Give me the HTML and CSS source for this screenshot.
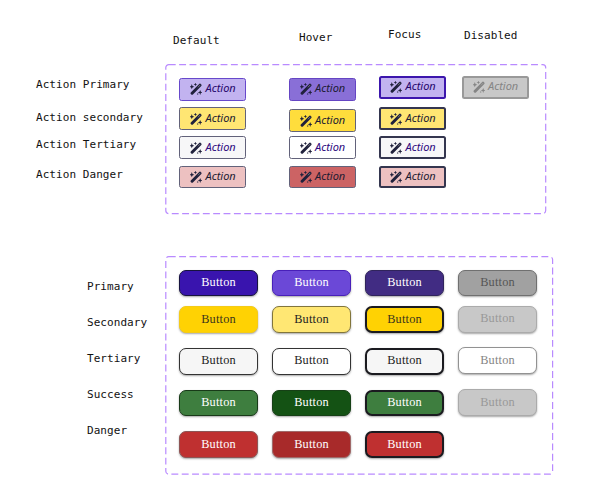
FILE: index.html
```html
<!DOCTYPE html>
<html lang="en">
<head>
<meta charset="utf-8">
<title>Button states</title>
<link rel="stylesheet" href="styles.css">
</head>
<body>
<svg class="defs" width="0" height="0" aria-hidden="true">
  <symbol id="wand" viewBox="0 0 12 12">
    <path d="M2.1 10.2 10 2.2" fill="none" stroke="currentColor" stroke-width="3" stroke-linecap="round"/>
    <path class="slit" d="M8.2 4 10 2.2" fill="none" stroke-width=".6" stroke-linecap="round"/>
    <path fill="currentColor" d="M1.8 1.1 2.5 3 4.4 3.7 2.5 4.4 1.8 6.3 1.1 4.4-.8 3.7 1.1 3ZM5.4-.5 5.9.9 7.2 1.4 5.9 1.9 5.4 3.2 4.9 1.9 3.6 1.4 4.9.9ZM10.2 6.9 10.9 8.8 12.8 9.4 10.9 10.1 10.2 12 9.5 10.1 7.6 9.4 9.5 8.8ZM7.8 9.8 8.1 10.7 9 11 8.1 11.3 7.8 12.2 7.5 11.3 6.6 11 7.5 10.7Z"/>
  </symbol>
</svg>
<header class="states">
  <span class="s-default">Default</span><span class="s-hover">Hover</span><span class="s-focus">Focus</span><span class="s-disabled">Disabled</span>
</header>
<section class="group actions">
  <div class="labels">
    <span>Action Primary</span><span>Action secondary</span><span>Action Tertiary</span><span>Action Danger</span>
  </div>
  <div class="panel">
    <svg class="frame" width="382" height="151"><rect x=".8" y=".6" width="379.9" height="149" rx="3"/></svg>
    <div class="col">
      <button class="action lilac"><svg><use href="#wand"/></svg>Action</button>
      <button class="action yellow"><svg><use href="#wand"/></svg>Action</button>
      <button class="action light"><svg><use href="#wand"/></svg>Action</button>
      <button class="action pink"><svg><use href="#wand"/></svg>Action</button>
    </div>
    <div class="col hover">
      <button class="action violet"><svg><use href="#wand"/></svg>Action</button>
      <button class="action gold"><svg><use href="#wand"/></svg>Action</button>
      <button class="action white"><svg><use href="#wand"/></svg>Action</button>
      <button class="action red"><svg><use href="#wand"/></svg>Action</button>
    </div>
    <div class="col focus">
      <button class="action lilac"><svg><use href="#wand"/></svg>Action</button>
      <button class="action yellow"><svg><use href="#wand"/></svg>Action</button>
      <button class="action light"><svg><use href="#wand"/></svg>Action</button>
      <button class="action pink"><svg><use href="#wand"/></svg>Action</button>
    </div>
    <div class="col disabled">
      <button class="action grey" disabled><svg><use href="#wand"/></svg>Action</button>
    </div>
  </div>
</section>
<section class="group buttons">
  <div class="labels">
    <span>Primary</span><span>Secondary</span><span>Tertiary</span><span>Success</span><span>Danger</span>
  </div>
  <div class="panel">
    <svg class="frame" width="389" height="220"><rect x=".8" y=".6" width="386.8" height="217.6" rx="3"/></svg>
    <div class="col">
      <button class="btn primary">Button</button>
      <button class="btn secondary">Button</button>
      <button class="btn tertiary">Button</button>
      <button class="btn success">Button</button>
      <button class="btn danger">Button</button>
    </div>
    <div class="col">
      <button class="btn primary-hover">Button</button>
      <button class="btn secondary-hover">Button</button>
      <button class="btn tertiary-hover">Button</button>
      <button class="btn success-hover">Button</button>
      <button class="btn danger-hover">Button</button>
    </div>
    <div class="col focus">
      <button class="btn primary-focus">Button</button>
      <button class="btn secondary">Button</button>
      <button class="btn tertiary">Button</button>
      <button class="btn success">Button</button>
      <button class="btn danger">Button</button>
    </div>
    <div class="col disabled">
      <button class="btn off-dark" disabled>Button</button>
      <button class="btn off" disabled>Button</button>
      <button class="btn off-white" disabled>Button</button>
      <button class="btn off" disabled>Button</button>
    </div>
  </div>
</section>
</body>
</html>
```
FILE: styles.css
```css
* { box-sizing: border-box; }
body {
  margin: 0;
  width: 606px;
  height: 501px;
  overflow: hidden;
  background: #fff;
  color: #111;
  font: 11px/14px "DejaVu Sans Mono", "Liberation Mono", monospace;
  letter-spacing: .06px;
}
.defs { display: block; }
button { margin: 0; padding: 0; font: inherit; }

.states {
  display: grid;
  grid-template-columns: 126px 89px 76px 80px;
  height: 64px;
  padding: 28px 0 0 173px;
}
.s-default { margin-top: 6px; }
.s-hover { margin-top: 3px; }
.s-disabled { margin-top: 1px; }

.group { display: flex; }
.labels { display: flex; flex-direction: column; flex: none; width: 165px; }
.actions { height: 192px; }
.actions .labels { padding: 14px 0 0 36px; }
.actions .labels span:nth-child(2) { margin-top: 19px; }
.actions .labels span:nth-child(3) { margin-top: 13px; }
.actions .labels span:nth-child(4) { margin-top: 16px; }
.buttons .labels { padding: 24px 0 0 87px; gap: 22px; }

.panel { position: relative; display: flex; padding-left: 14px; }
.actions .panel { width: 382px; height: 151px; }
.buttons .panel { width: 389px; height: 220px; padding-top: 13.7px; gap: 14px; }
.frame { position: absolute; left: 0; top: 0; }
.frame rect { fill: none; stroke: #b98aff; stroke-width: 1.2; stroke-dasharray: 6.9 3.45; }
.col { position: relative; display: flex; flex-direction: column; }

.actions .col { gap: 6.5px; padding-top: 14px; }
.actions .hover { margin-left: 42.5px; }
.actions .hover .gold { margin: 2px 0 -2px; }
.actions .focus { margin-left: 23.5px; padding-top: 12px; }
.actions .focus .yellow { margin-top: 2px; }
.actions .disabled { margin-left: 15.5px; padding-top: 12px; }
.action {
  display: flex;
  align-items: center;
  gap: 3.5px;
  width: 67px;
  height: 22.7px;
  padding: 0 0 2px 10px;
  border: 1px solid #62627a;
  border-radius: 2.5px;
  color: #1c1b32;
  font: italic 400 11px/14px "Noto Sans", "Open Sans", sans-serif;
  letter-spacing: 0;
}
.action svg { position: relative; top: 1px; width: 12px; height: 12px; overflow: visible; color: #20213c; }
.slit { stroke: #aaa; }
.action.lilac { background: #c2b3f0; border-color: #6748cb; color: #26066b; }
.action.yellow { background: #ffe673; }
.action.light { background: #f7f7f8; color: #2d087e; }
.action.pink { background: #edc1c1; }
.action.violet { background: #896fd7; border-color: #6545c3; }
.action.gold { background: #ffdd3c; }
.action.white { background: #fff; color: #2d087e; }
.action.red { background: #cc6364; }
.action.grey { background: #c8c8c8; border: 2px solid #999; padding-left: 9px; color: #858585; }
.action.grey svg { color: #858585; }
.focus .action { border: 2px solid #34364f; padding-left: 9px; }
.focus .action.lilac { border-color: #3c16ad; }

.btn {
  width: 79px;
  height: 26.8px;
  padding-bottom: 2px;
  border: 1px solid #333;
  border-radius: 7px;
  box-shadow: 0 1px 2px rgba(0, 0, 0, .35);
  color: #fff;
  font: 12.3px/16px "Liberation Serif", serif;
  letter-spacing: .2px;
}
.buttons .btn:nth-child(2) { margin-top: 9.8px; }
.buttons .btn:nth-child(n+3) { margin-top: 14.9px; }
.buttons .disabled .btn:nth-child(2) { margin-top: 9.3px; }
.primary { background: #3914ae; border-color: #17133f; }
.secondary { background: #ffd203; border-color: #f4cb18; color: #3b351c; }
.tertiary { background: #f6f6f6; color: #222; }
.success { background: #3e7e3f; border-color: #183a18; }
.danger { background: #bf3030; border-color: #8d5555; }
.primary-hover { background: #6b48d7; border-color: #4820b9; }
.secondary-hover { background: #ffe773; border-color: #81753c; color: #222; }
.tertiary-hover { background: #fff; color: #222; }
.success-hover { background: #145214; border-color: #164016; }
.danger-hover { background: #a82a2a; border-color: #a06969; }
.primary-focus { background: #412c83; border-color: #30245c; }
.focus .btn:not(.primary-focus) { border: 2px solid #1b1b20; }
.off-dark { background: #a1a1a1; border-color: #707070; color: #555; }
.off { background: #c8c8c8; border-color: #ababab; color: #999; }
.off-white { background: #fff; border-color: #929292; color: #858585; }
```
